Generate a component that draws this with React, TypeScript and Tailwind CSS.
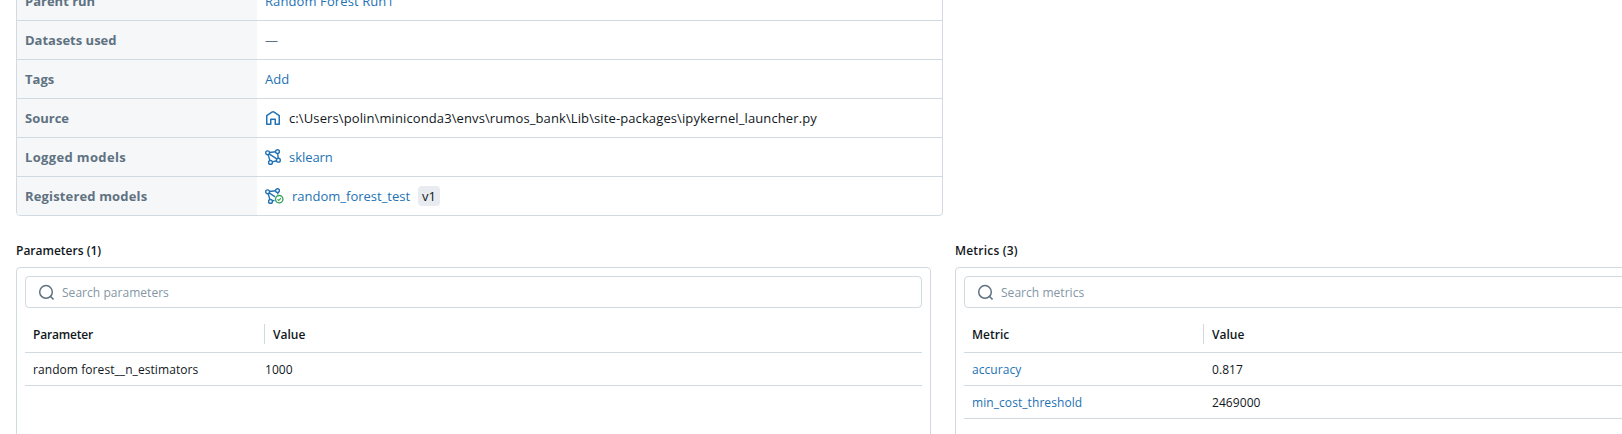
import type { ReactNode } from "react";

function HomeIcon() {
  return (
    <svg width="16" height="16" viewBox="0 0 16 16" fill="none" stroke="#2272b4" strokeWidth="1.5">
      <path d="M1.75 14.25V5.6L6.9 2.1Q8 1.4 9.1 2.1L14.25 5.6V14.25H10.25V9.25H5.75V14.25Z" strokeLinejoin="round" />
    </svg>
  );
}

function ModelGraph() {
  return (
    <g stroke="#2272b4" strokeWidth="1.4" fill="none">
      <circle cx="2.6" cy="3.8" r="1.9" />
      <circle cx="12.5" cy="2.6" r="1.9" />
      <path d="M4.5 3.5L10.6 2.8M3.2 5.6L4.9 11.6M12.7 4.5L13.2 9.4M4.1 4.9L12.1 10.1" />
    </g>
  );
}

function ModelIcon() {
  return (
    <svg width="16" height="16" viewBox="0 0 16 16" fill="none">
      <ModelGraph />
      <g stroke="#2272b4" strokeWidth="1.4">
        <circle cx="13.4" cy="11.2" r="1.9" />
        <circle cx="5.5" cy="13.4" r="1.9" />
        <path d="M7.4 12.9L11.6 11.8" />
      </g>
    </svg>
  );
}

function RegisteredModelIcon() {
  return (
    <svg width="19" height="16" viewBox="0 0 19 16" fill="none">
      <ModelGraph />
      <g stroke="#2272b4" strokeWidth="1.4">
        <circle cx="5.5" cy="13.4" r="1.9" />
        <path d="M7.4 12.9L10 12.3" />
      </g>
      <circle cx="14.2" cy="11.2" r="4.9" fill="#fff" />
      <circle cx="14.2" cy="11.2" r="3.7" stroke="#3ba65e" strokeWidth="1.4" />
      <path d="M12.5 11.4L13.7 12.5L16 10.1" stroke="#3ba65e" strokeWidth="1.2" />
    </svg>
  );
}

function SearchIcon() {
  return (
    <svg className="shrink-0" width="16" height="16" viewBox="0 0 16 16" fill="none" stroke="#5f7281" strokeWidth="1.5">
      <circle cx="8" cy="7.9" r="6.3" />
      <path d="M12.3 12.2L15.5 15.4" />
    </svg>
  );
}

function Row({ label, children }: { label: ReactNode; children: ReactNode }) {
  return (
    <div className="flex h-[39px] border-b border-[#d1d9e1] last:h-[38px] last:border-b-0">
      <div className="flex w-60 shrink-0 items-center bg-[#f6f7f9] px-2 font-bold text-[#5f7281]">{label}</div>
      <div className="flex items-center px-2 whitespace-nowrap">{children}</div>
    </div>
  );
}

type Entry = { name: string; value: string };

function DataPanel({ title, placeholder, column, entries, linked }: {
  title: ReactNode;
  placeholder: string;
  column: ReactNode;
  entries: Entry[];
  linked?: boolean;
}) {
  return (
    <section className="w-[915px] shrink-0 text-xs leading-[17px]">
      <h2 className="mb-2 h-5 pt-[3px] font-semibold">{title}</h2>
      <div className="h-[200px] rounded-sm border border-[#d1d9e1] p-2">
        <div className="flex h-8 items-center gap-2 rounded-sm border border-[#d1d9e1] px-3 text-[#8396a5]">
          <SearchIcon />
          <span className="mt-px tracking-[0.04px]">{placeholder}</span>
        </div>
        <div className="mt-2 flex h-[37px] items-center border-b border-[#d1d9e1] font-semibold">
          <div className="mt-px w-[239px] px-2">{column}</div>
          <div className="flex h-5 items-center border-l border-[#d1d9e1] pl-2">
            <span className="mt-px">Value</span>
          </div>
        </div>
        {entries.map((e) => (
          <div key={e.name} className="flex h-[33px] items-center border-b border-[#d1d9e1] pt-px tracking-[0.07px]">
            <div className={linked ? "w-60 px-2 text-[#2272b4]" : "w-[232px] px-2"}>{e.name}</div>
            <div className="pl-2">{e.value}</div>
          </div>
        ))}
      </div>
    </section>
  );
}

export default function App() {
  return (
    <main className="h-[434px] w-full overflow-hidden bg-white pl-4 font-['Open_Sans','Noto_Sans',sans-serif] text-[13px] leading-5 text-[#11171c]">
      <div className="-mt-[19px] h-[235px] w-[927px] overflow-hidden rounded-sm border border-[#d1d9e1]">
        <Row label="Parent run"><span className="tracking-[0.1px] text-[#2272b4]">Random Forest Run1</span></Row>
        <Row label="Datasets used"><span className="text-[#5f7281]">—</span></Row>
        <Row label="Tags"><span className="text-[#2272b4]">Add</span></Row>
        <Row label="Source">
          <HomeIcon />
          <span className="ml-2 tracking-[0.11px]">{"c:\\Users\\polin\\miniconda3\\envs\\rumos_bank\\Lib\\site-packages\\ipykernel_launcher.py"}</span>
        </Row>
        <Row label={<span className="tracking-[0.35px]">Logged models</span>}>
          <ModelIcon />
          <span className="ml-2 tracking-[-0.05px] text-[#2272b4]">sklearn</span>
        </Row>
        <Row label={<span className="tracking-[0.15px]">Registered models</span>}>
          <RegisteredModelIcon />
          <span className="ml-2 text-[#2272b4]">random_forest_test</span>
          <span className="ml-2 rounded bg-[#e8ecf0] px-1">v1</span>
        </Row>
      </div>
      <div className="mt-[23px] flex gap-6">
        <DataPanel
          title="Parameters (1)"
          placeholder="Search parameters"
          column={<span className="tracking-[-0.2px]">Parameter</span>}
          entries={[{ name: "random forest__n_estimators", value: "1000" }]}
        />
        <DataPanel
          linked
          title={<span className="tracking-[0.2px]">Metrics (3)</span>}
          placeholder="Search metrics"
          column="Metric"
          entries={[
            { name: "accuracy", value: "0.817" },
            { name: "min_cost_threshold", value: "2469000" },
          ]}
        />
      </div>
    </main>
  );
}
